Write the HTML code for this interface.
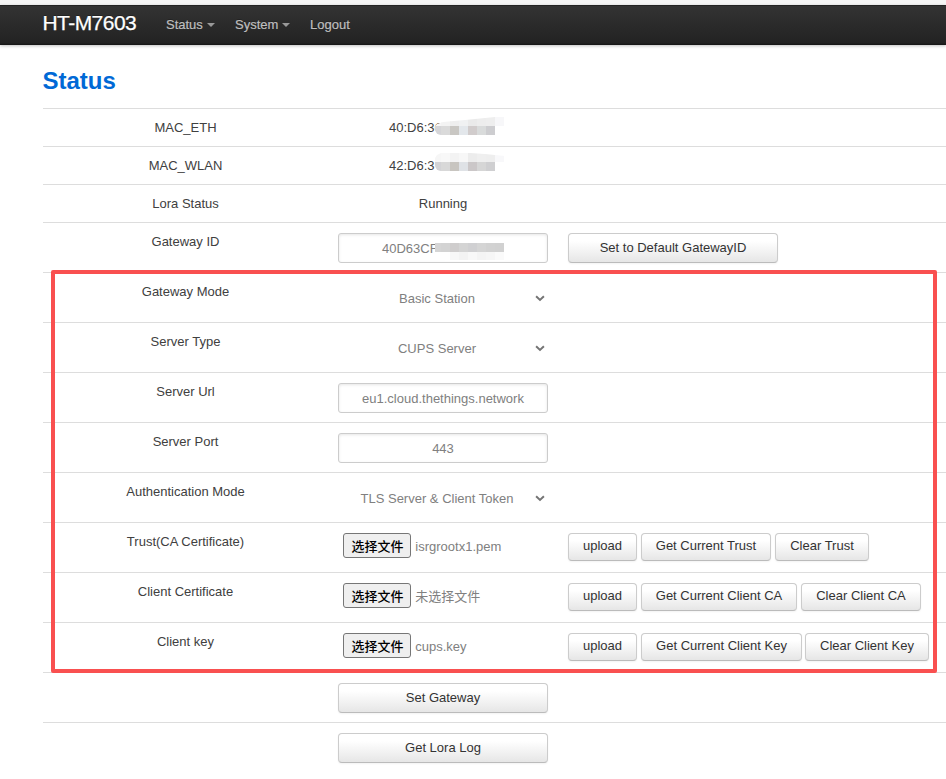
<!DOCTYPE html>
<html lang="en">
<head>
<meta charset="utf-8">
<title>HT-M7603 - Status</title>
<style>
*{box-sizing:border-box}
html,body{margin:0;padding:0}
body{width:946px;height:779px;overflow:hidden;background:#fff;position:relative;
 font-family:"Liberation Sans","Noto Sans CJK SC",sans-serif;font-size:13px;line-height:18px;color:#404040}
.topstrip{position:absolute;left:0;top:0;width:946px;height:5px;background:#f5f5f5}
header{position:absolute;left:0;top:5px;width:946px;height:40px;
 background:#222;background-image:linear-gradient(to bottom,#333,#222);
 box-shadow:0 1px 3px rgba(0,0,0,.25),inset 0 -1px 0 rgba(0,0,0,.1);border-top:1px solid #232323;border-bottom:1px solid #181818}
header .brand{position:absolute;left:42.5px;top:2px;font-size:21px;letter-spacing:-0.55px;line-height:30px;color:#fff;font-weight:normal;-webkit-text-stroke:0.25px #fff;text-shadow:0 -1px 0 rgba(0,0,0,.25)}
header .nav{position:absolute;top:0;left:0;margin:0;padding:0;list-style:none}
header .nav li{position:absolute;top:9px;white-space:nowrap;color:#bfbfbf;font-size:13px;line-height:19px;-webkit-text-stroke:0.2px #bfbfbf;text-shadow:0 -1px 0 rgba(0,0,0,.25)}
.caret{display:inline-block;width:0;height:0;border-left:4px solid transparent;border-right:4px solid transparent;border-top:4px solid #999;vertical-align:middle;margin-left:4px;margin-top:-1px}
h2{position:absolute;left:42.5px;top:63px;margin:0;font-size:24px;line-height:36px;font-weight:bold;color:#0069d6}
.row{position:absolute;left:43px;width:903px;border-top:1px solid #ddd}
.lbl{position:absolute;left:0;width:285px;text-align:center;color:#404040}
.val{position:absolute;left:295px;width:210px;text-align:center;color:#404040}
.inp{position:absolute;left:295px;width:210px;height:30px;border:1px solid #ccc;border-radius:3px;background:#fff;text-align:center;color:#808080;line-height:29px;box-shadow:inset 0 1px 3px rgba(0,0,0,.1)}
.sel{position:absolute;left:295px;width:210px;height:28px;text-align:center;color:#808080;line-height:28px;padding-right:12px}
.btn{position:absolute;height:30px;border:1px solid #ccc;border-bottom-color:#bbb;border-radius:4px;background:#e6e6e6;background-image:linear-gradient(to bottom,#fff,#fff 25%,#e6e6e6);color:#333;text-align:center;line-height:27px;font-size:13px;box-shadow:inset 0 1px 0 rgba(255,255,255,.2),0 1px 2px rgba(0,0,0,.05);white-space:nowrap}
.btn.sm{top:10px;height:28px;line-height:24px}
.fbtn{position:absolute;left:300px;width:68px;height:25px;border:1px solid #767676;border-radius:3px;background:#efefef;color:#000;font-size:13px;line-height:25px;padding-left:1px;text-align:center;font-weight:500;font-family:"Liberation Sans","Noto Sans CJK SC",sans-serif}
.fname{position:absolute;left:372.3px;color:#808080;white-space:nowrap}
.chev{position:absolute;left:492px;width:10px;height:7px}
.redbox{position:absolute;left:51px;top:270px;width:886px;height:403px;border:4px solid #f95050;border-radius:2px}
.mos{position:absolute}
</style>
</head>
<body>
<div class="topstrip"></div>
<header>
 <div class="brand">HT-M7603</div>
 <ul class="nav">
  <li style="left:166px">Status<span class="caret"></span></li>
  <li style="left:235px">System<span class="caret"></span></li>
  <li style="left:310px">Logout</li>
 </ul>
</header>
<h2>Status</h2>

<div class="row" style="top:108px;height:38px"><div class="lbl" style="top:10px">MAC_ETH</div><div class="val" style="top:10px;text-align:left;padding-left:51px">40:D6:3C</div></div>
<div class="row" style="top:146px;height:38px"><div class="lbl" style="top:10px">MAC_WLAN</div><div class="val" style="top:10px;text-align:left;padding-left:51px">42:D6:3</div></div>
<div class="row" style="top:184px;height:38px"><div class="lbl" style="top:10px">Lora Status</div><div class="val" style="top:10px">Running</div></div>
<div class="row" style="top:222px;height:50px"><div class="lbl" style="top:10px">Gateway ID</div><div class="inp" style="top:10px;text-align:left;padding-left:43px">40D63CF</div><div class="btn" style="left:525px;top:10px;width:210px">Set to Default GatewayID</div></div>
<div class="row" style="top:272px;height:50px"><div class="lbl" style="top:10px">Gateway Mode</div><div class="sel" style="top:12px">Basic Station</div><svg class="chev" style="top:22px" viewBox="0 0 10 7"><path d="M1.1 1.2 L5 4.9 L8.9 1.2" fill="none" stroke="#747474" stroke-width="2"/></svg></div>
<div class="row" style="top:322px;height:50px"><div class="lbl" style="top:10px">Server Type</div><div class="sel" style="top:12px">CUPS Server</div><svg class="chev" style="top:22px" viewBox="0 0 10 7"><path d="M1.1 1.2 L5 4.9 L8.9 1.2" fill="none" stroke="#747474" stroke-width="2"/></svg></div>
<div class="row" style="top:372px;height:50px"><div class="lbl" style="top:10px">Server Url</div><div class="inp" style="top:10px">eu1.cloud.thethings.network</div></div>
<div class="row" style="top:422px;height:50px"><div class="lbl" style="top:10px">Server Port</div><div class="inp" style="top:10px">443</div></div>
<div class="row" style="top:472px;height:50px"><div class="lbl" style="top:10px">Authentication Mode</div><div class="sel" style="top:12px">TLS Server &amp; Client Token</div><svg class="chev" style="top:22px" viewBox="0 0 10 7"><path d="M1.1 1.2 L5 4.9 L8.9 1.2" fill="none" stroke="#747474" stroke-width="2"/></svg></div>
<div class="row" style="top:522px;height:50px"><div class="lbl" style="top:10px">Trust(CA Certificate)</div><div class="fbtn" style="top:10px">选择文件</div><div class="fname" style="top:15px">isrgrootx1.pem</div>
 <div class="btn sm" style="left:525px;width:69px">upload</div><div class="btn sm" style="left:598px;width:130px">Get Current Trust</div><div class="btn sm" style="left:732px;width:94px">Clear Trust</div></div>
<div class="row" style="top:572px;height:50px"><div class="lbl" style="top:10px">Client Certificate</div><div class="fbtn" style="top:10px">选择文件</div><div class="fname" style="top:15px">未选择文件</div>
 <div class="btn sm" style="left:525px;width:69px">upload</div><div class="btn sm" style="left:598px;width:156px">Get Current Client CA</div><div class="btn sm" style="left:758px;width:120px">Clear Client CA</div></div>
<div class="row" style="top:622px;height:50px"><div class="lbl" style="top:10px">Client key</div><div class="fbtn" style="top:10px">选择文件</div><div class="fname" style="top:15px">cups.key</div>
 <div class="btn sm" style="left:525px;width:69px">upload</div><div class="btn sm" style="left:598px;width:161px">Get Current Client Key</div><div class="btn sm" style="left:762px;width:124px">Clear Client Key</div></div>
<div class="row" style="top:672px;height:50px"><div class="btn" style="left:295px;top:10px;width:210px">Set Gateway</div></div>
<div class="row" style="top:722px;height:50px"><div class="btn" style="left:295px;top:10px;width:210px">Get Lora Log</div></div>
<div class="mosaics"><div class="mos" style="left:435px;top:117px;width:70px;height:9px;clip-path:polygon(0 9px,2px 7px,8px 5px,30px 3px,50px 1px,60px 0,70px 0,70px 9px)"><i class="mos" style="left:0.0px;top:0px;width:6.7px;height:9px;background:#f6f6f6"></i><i class="mos" style="left:6.4px;top:0px;width:9.2px;height:9px;background:#f3f3f3"></i><i class="mos" style="left:15.3px;top:0px;width:9.2px;height:9px;background:#eeeeee"></i><i class="mos" style="left:24.2px;top:0px;width:9.2px;height:9px;background:#f0f1f2"></i><i class="mos" style="left:33.1px;top:0px;width:9.1px;height:9px;background:#eaeaea"></i><i class="mos" style="left:41.9px;top:0px;width:9.2px;height:9px;background:#ededed"></i><i class="mos" style="left:50.8px;top:0px;width:9.6px;height:9px;background:#eeeeee"></i><i class="mos" style="left:60.1px;top:0px;width:9.2px;height:9px;background:#f7f7f9"></i></div><div class="mos" style="left:435px;top:126px;width:61px;height:9px;clip-path:inset(0 0 0 0 round 0 0 0 6px)"><i class="mos" style="left:0.0px;top:0px;width:6.7px;height:9px;background:#d5d5d8"></i><i class="mos" style="left:6.4px;top:0px;width:9.2px;height:9px;background:#dadada"></i><i class="mos" style="left:15.3px;top:0px;width:9.2px;height:9px;background:#c9c7c3"></i><i class="mos" style="left:24.2px;top:0px;width:9.2px;height:9px;background:#e3e7eb"></i><i class="mos" style="left:33.1px;top:0px;width:9.1px;height:9px;background:#d1cccc"></i><i class="mos" style="left:41.9px;top:0px;width:9.2px;height:9px;background:#d9dbdb"></i><i class="mos" style="left:50.8px;top:0px;width:9.6px;height:9px;background:#cdcdd0"></i></div><div class="mos" style="left:435px;top:153px;width:70px;height:9px;clip-path:polygon(0 9px,0 5px,2px 2px,6px 0,35px 0,50px 1px,70px 3px,70px 9px)"><i class="mos" style="left:0.0px;top:0px;width:6.7px;height:9px;background:#f6f6f6"></i><i class="mos" style="left:6.4px;top:0px;width:9.2px;height:9px;background:#f8f8f8"></i><i class="mos" style="left:15.3px;top:0px;width:9.2px;height:9px;background:#f3f3f3"></i><i class="mos" style="left:24.2px;top:0px;width:9.2px;height:9px;background:#f7f7f7"></i><i class="mos" style="left:33.1px;top:0px;width:9.1px;height:9px;background:#ececec"></i><i class="mos" style="left:41.9px;top:0px;width:9.2px;height:9px;background:#efefef"></i><i class="mos" style="left:50.8px;top:0px;width:9.6px;height:9px;background:#eeeeee"></i><i class="mos" style="left:60.1px;top:0px;width:9.2px;height:9px;background:#f8f8fa"></i></div><div class="mos" style="left:435px;top:162px;width:61px;height:9px;clip-path:inset(0 0 0 0 round 0 0 0 6px)"><i class="mos" style="left:0.0px;top:0px;width:6.7px;height:9px;background:#d3d3d6"></i><i class="mos" style="left:6.4px;top:0px;width:9.2px;height:9px;background:#d8d8d8"></i><i class="mos" style="left:15.3px;top:0px;width:9.2px;height:9px;background:#c8c5c0"></i><i class="mos" style="left:24.2px;top:0px;width:9.2px;height:9px;background:#dfe2e6"></i><i class="mos" style="left:33.1px;top:0px;width:9.1px;height:9px;background:#cbc7c8"></i><i class="mos" style="left:41.9px;top:0px;width:9.2px;height:9px;background:#d6d6d6"></i><i class="mos" style="left:50.8px;top:0px;width:9.6px;height:9px;background:#cfcfd1"></i></div><i class="mos" style="left:437px;top:239px;width:76px;height:22px;background:#fff;border-radius:11px"></i><div class="mos" style="left:435px;top:243px;width:70px;height:9px"><i class="mos" style="left:0.0px;top:0px;width:6.7px;height:9px;background:#d5d5d5"></i><i class="mos" style="left:6.4px;top:0px;width:9.2px;height:9px;background:#d3d3d3"></i><i class="mos" style="left:15.3px;top:0px;width:9.2px;height:9px;background:#cfcdcd"></i><i class="mos" style="left:24.2px;top:0px;width:9.2px;height:9px;background:#d4d4d4"></i><i class="mos" style="left:33.1px;top:0px;width:9.1px;height:9px;background:#d0d0d2"></i><i class="mos" style="left:41.9px;top:0px;width:9.2px;height:9px;background:#d5d5d5"></i><i class="mos" style="left:50.8px;top:0px;width:9.6px;height:9px;background:#d2d2d2"></i><i class="mos" style="left:60.1px;top:0px;width:9.2px;height:9px;background:#d1d1d1"></i></div><div class="mos" style="left:435px;top:252px;width:70px;height:8px"><i class="mos" style="left:15.3px;top:0;width:9.2px;height:8px;background:#f7f7f7"></i><i class="mos" style="left:24.2px;top:0;width:9.2px;height:8px;background:#f3f3f3"></i><i class="mos" style="left:33.1px;top:0;width:9.1px;height:8px;background:#f8f8f8"></i><i class="mos" style="left:41.9px;top:0;width:9.2px;height:8px;background:#f4f4f4"></i><i class="mos" style="left:50.8px;top:0;width:9.6px;height:8px;background:#f6f6f6"></i><i class="mos" style="left:60.1px;top:0;width:9.2px;height:8px;background:#fafafa"></i></div></div>
<div class="redbox"></div>
</body>
</html>
